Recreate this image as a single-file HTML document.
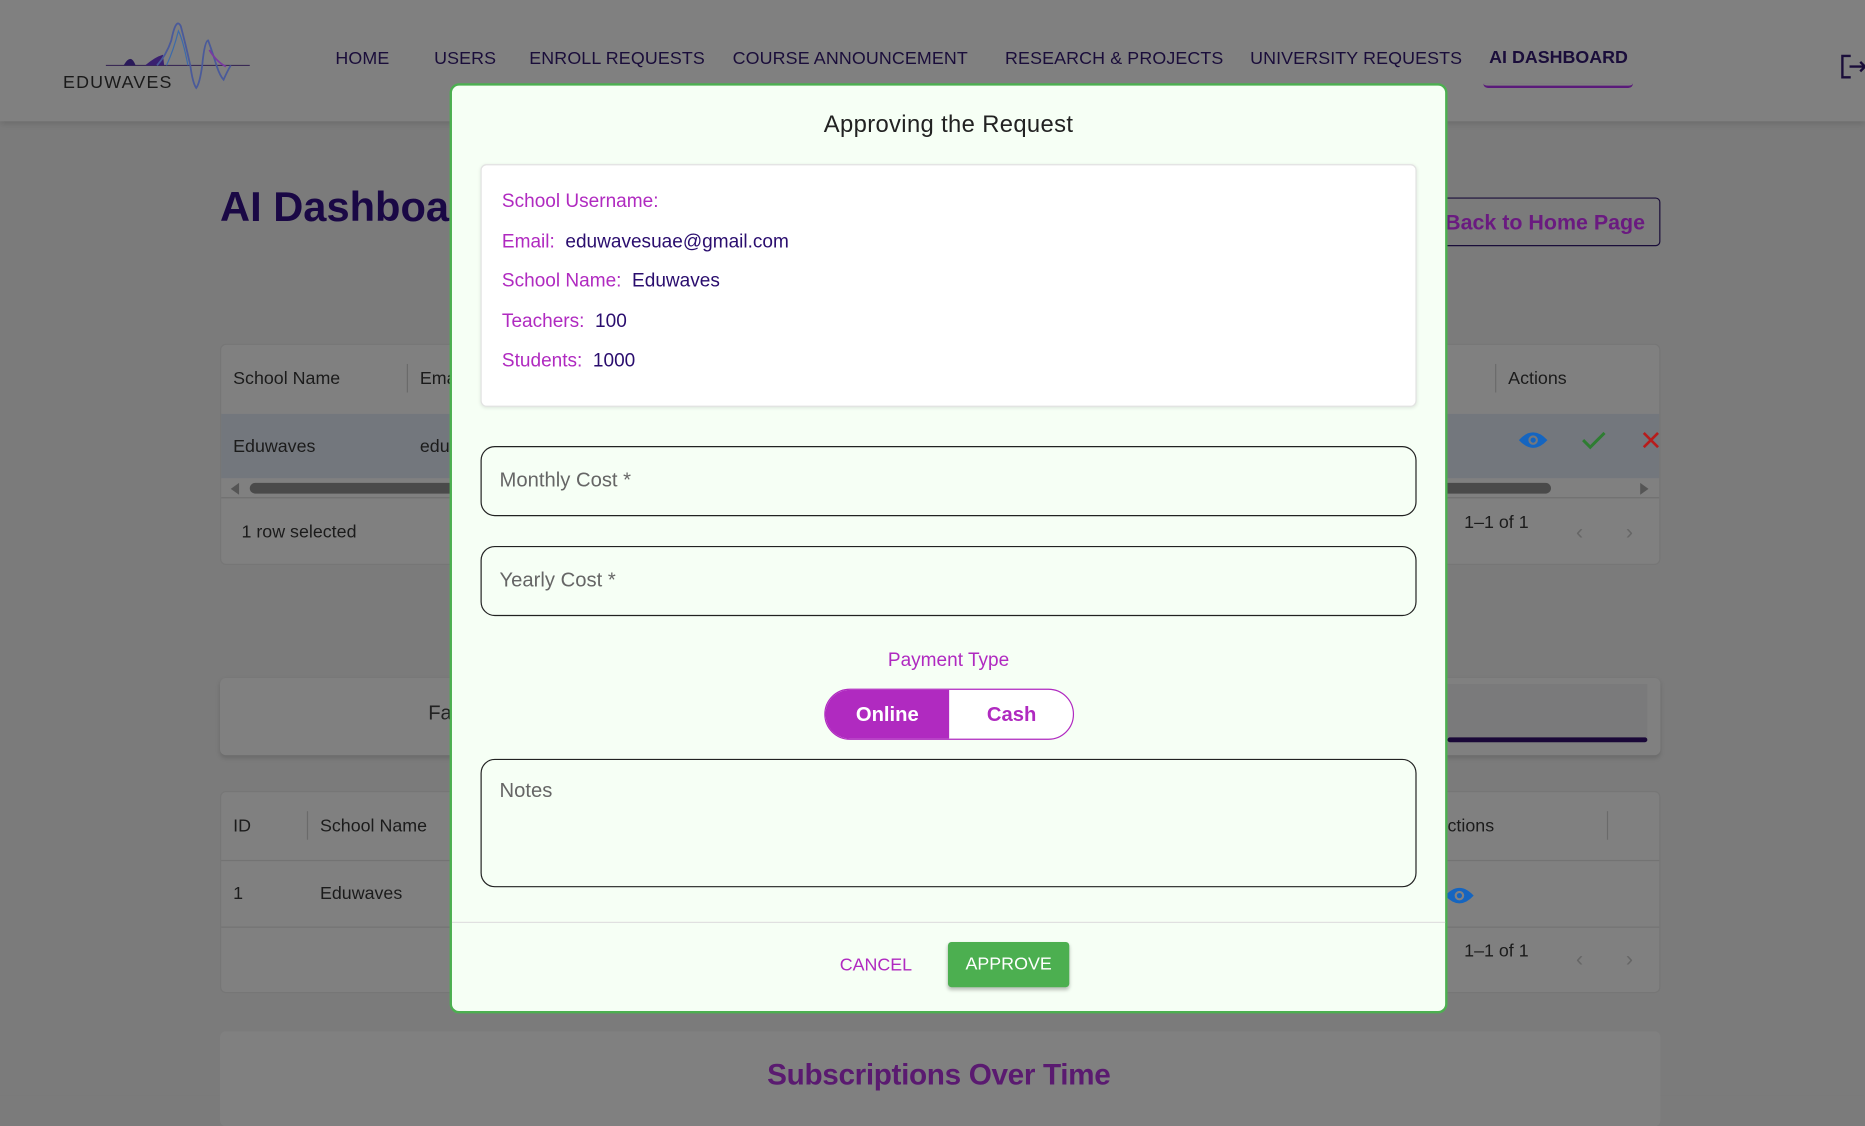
<!DOCTYPE html>
<html><head><meta charset="utf-8"><style>
*{box-sizing:border-box;margin:0;padding:0}
html,body{width:1865px;height:1095px;overflow:hidden;background:#7b7b7b;font-family:"Liberation Sans",sans-serif}
#w{position:absolute;left:0;top:0;width:1568px;height:921px;transform:scale(1.18941);transform-origin:0 0;background:#7b7b7b}
.a{position:absolute}
.hdr{left:0;top:0;width:1568px;height:102px;background:#808080;box-shadow:0 2px 6px rgba(0,0,0,.15)}
.nav{top:41px;font-size:15px;color:#1a0d3a;letter-spacing:.1px}
.card{background:#808080;border:1px solid #767676;border-radius:5px}
.t{font-size:15px;color:#1b1b1b}
.modal{left:378px;top:70px;width:839px;height:782px;background:#f6fff5;border:2px solid #4caf50;border-radius:8px}
.lbl{color:#b02ac0}
.val{color:#2a0d6e}
.inp{position:absolute;left:24px;width:787px;border:1.5px solid #222;border-radius:12px;font-size:17px;color:#666;padding-left:15px}
</style></head><body><div id="w">
<div class="a hdr"></div>
<svg class="a" style="left:52px;top:12px" width="160" height="72" viewBox="0 0 160 72">
<line x1="37" y1="43" x2="158" y2="43" stroke="#3a2a55" stroke-width="1"/>
<path d="M52 43 Q58 32 62 43 Z" fill="#2a1a5a"/>
<path d="M70 43 Q78 36 85 34 L86 43 Z" fill="#3a2070"/>
<path d="M80 43 Q88 34 92 22 Q96 2 100 10 Q104 25 108 43 Q110 58 113 62 Q116 58 118 43 Q120 22 123 22 Q126 30 130 43 Q133 52 136 55 Q139 48 142 43" fill="none" stroke="#4a5a9a" stroke-width="1.5"/>
<path d="M88 43 Q94 30 98 14 Q102 22 106 43" fill="none" stroke="#3c6aaa" stroke-width="1"/>
<path d="M124 30 Q130 40 138 44" fill="none" stroke="#7a3aa0" stroke-width="1.5"/>
<text x="1" y="62" font-family="Liberation Sans" font-size="15" fill="#1a1a1a" letter-spacing="1">EDUWAVES</text>
</svg>
<div class="a nav" style="left:282px">HOME</div>
<div class="a nav" style="left:365px">USERS</div>
<div class="a nav" style="left:445px">ENROLL REQUESTS</div>
<div class="a nav" style="left:616px">COURSE ANNOUNCEMENT</div>
<div class="a nav" style="left:845px">RESEARCH &amp; PROJECTS</div>
<div class="a nav" style="left:1051px">UNIVERSITY REQUESTS</div>
<div class="a nav" style="left:1252px;top:40px;font-weight:bold;letter-spacing:0">AI DASHBOARD</div>
<div class="a" style="left:1247px;top:70px;width:126px;height:4px;border-bottom:2px solid #5a1a7a;border-radius:0 0 6px 6px"></div>
<svg class="a" style="left:1546px;top:44px" width="24" height="24" viewBox="0 0 24 24"><path d="M10 3H3v18h7M9 12h13M18 8l4 4-4 4" fill="none" stroke="#1a0d3a" stroke-width="2"/></svg>

<div class="a" style="left:185px;top:155px;font-size:35px;font-weight:bold;color:#1a0845">AI Dashboard</div>
<div class="a" style="left:1150px;top:166px;width:246px;height:41px;border:1.5px solid #1a0d3a;border-radius:4px;font-size:18px;font-weight:bold;color:#6a1a80;padding:10px 0 0 64px">Back to Home Page</div>

<div class="a card" style="left:185px;top:289px;width:1211px;height:186px"></div>
<div class="a" style="left:186px;top:348px;width:1209px;height:54px;background:#73777d"></div>
<div class="a t" style="left:196px;top:310px">School Name</div>
<div class="a" style="left:342px;top:306px;width:1px;height:24px;background:#6a6a6a"></div>
<div class="a t" style="left:353px;top:310px">Email</div>
<div class="a t" style="left:196px;top:367px">Eduwaves</div>
<div class="a t" style="left:353px;top:367px">edu</div>
<div class="a" style="left:1257px;top:306px;width:1px;height:24px;background:#6a6a6a"></div>
<div class="a t" style="left:1268px;top:310px">Actions</div>
<svg class="a" style="left:1276px;top:361px" width="26" height="18" viewBox="0 0 26 18"><path d="M1 9Q13 -4 25 9Q13 22 1 9Z" fill="#1565c0"/><circle cx="13" cy="9" r="4" fill="#73777d"/><circle cx="13" cy="9" r="2.2" fill="#1565c0"/></svg>
<svg class="a" style="left:1329px;top:361px" width="22" height="18" viewBox="0 0 22 18"><path d="M2 9l6 6L20 3" fill="none" stroke="#2e7d32" stroke-width="2.5"/></svg>
<svg class="a" style="left:1380px;top:362px" width="16" height="16" viewBox="0 0 16 16"><path d="M2 2l12 12M14 2L2 14" stroke="#b71c1c" stroke-width="2.2"/></svg>
<div class="a" style="left:210px;top:406px;width:1094px;height:9px;background:#4a4a4a;border-radius:5px"></div>
<div class="a" style="left:194px;top:406px;width:0;height:0;border:5px solid transparent;border-right:7px solid #555;border-left:0"></div>
<div class="a" style="left:1379px;top:406px;width:0;height:0;border:5px solid transparent;border-left:7px solid #555;border-right:0"></div>
<div class="a" style="left:186px;top:418px;width:1209px;height:1px;background:#707070"></div>
<div class="a t" style="left:203px;top:439px">1 row selected</div>
<div class="a t" style="left:1231px;top:431px">1–1 of 1</div>
<div class="a" style="left:1325px;top:437px;font-size:18px;color:#666">‹</div>
<div class="a" style="left:1367px;top:437px;font-size:18px;color:#666">›</div>

<div class="a card" style="left:185px;top:570px;width:1211px;height:65px;border:none;box-shadow:0 2px 4px rgba(0,0,0,.15)"></div>
<div class="a" style="left:1217px;top:575px;width:168px;height:48px;background:#7a7a7b"></div>
<div class="a" style="left:1217px;top:620px;width:168px;height:4px;background:#1a0838;border-radius:2px"></div>
<div class="a" style="left:360px;top:590px;font-size:17px;color:#222">Fa</div>

<div class="a card" style="left:185px;top:665px;width:1211px;height:170px"></div>
<div class="a t" style="left:196px;top:686px">ID</div>
<div class="a" style="left:258px;top:682px;width:1px;height:24px;background:#6a6a6a"></div>
<div class="a t" style="left:269px;top:686px">School Name</div>
<div class="a t" style="left:1217px;top:686px">ctions</div>
<div class="a" style="left:1351px;top:682px;width:1px;height:24px;background:#6a6a6a"></div>
<div class="a" style="left:186px;top:723px;width:1209px;height:1px;background:#737373"></div>
<div class="a t" style="left:196px;top:743px">1</div>
<div class="a t" style="left:269px;top:743px">Eduwaves</div>
<svg class="a" style="left:1214px;top:744px" width="26" height="18" viewBox="0 0 26 18"><path d="M1 9Q13 -4 25 9Q13 22 1 9Z" fill="#1565c0"/><circle cx="13" cy="9" r="4" fill="#808080"/><circle cx="13" cy="9" r="2.2" fill="#1565c0"/></svg>
<div class="a" style="left:186px;top:779px;width:1209px;height:1px;background:#737373"></div>
<div class="a t" style="left:1231px;top:791px">1–1 of 1</div>
<div class="a" style="left:1325px;top:796px;font-size:18px;color:#666">‹</div>
<div class="a" style="left:1367px;top:796px;font-size:18px;color:#666">›</div>

<div class="a card" style="left:185px;top:867px;width:1211px;height:80px;border:none"></div>
<div class="a" style="left:645px;top:890px;font-size:25px;font-weight:bold;color:#5a1a70;letter-spacing:-0.3px">Subscriptions Over Time</div>

<div class="a modal">
 <div class="a" style="left:0;top:22px;width:835px;text-align:center;font-size:20px;color:#222;letter-spacing:.3px">Approving the Request</div>
 <div class="a" style="left:24px;top:66px;width:787px;height:204px;background:#fff;border:1px solid #e2e2e2;border-radius:5px;box-shadow:0 1px 3px rgba(0,0,0,.1);font-size:16px;line-height:33.6px;padding:14px 0 0 17px">
  <div class="lbl">School Username:</div>
  <div><span class="lbl">Email:</span>&nbsp; <span class="val">eduwavesuae@gmail.com</span></div>
  <div><span class="lbl">School Name:</span>&nbsp; <span class="val">Eduwaves</span></div>
  <div><span class="lbl">Teachers:</span>&nbsp; <span class="val">100</span></div>
  <div><span class="lbl">Students:</span>&nbsp; <span class="val">1000</span></div>
 </div>
 <div class="inp" style="top:303px;height:59px;line-height:56px">Monthly Cost *</div>
 <div class="inp" style="top:387px;height:59px;line-height:56px">Yearly Cost *</div>
 <div class="a" style="left:0;top:475px;width:835px;text-align:center;font-size:16px;color:#b02ac0">Payment Type</div>
 <div class="a" style="left:313px;top:507px;width:210px;height:43px;border:1px solid #b02ac0;border-radius:22px;overflow:hidden;background:#fff;font-size:17px;font-weight:bold">
  <div class="a" style="left:0;top:0;width:104px;height:41px;background:#b02ac0;color:#fff;text-align:center;line-height:41px">Online</div>
  <div class="a" style="left:104px;top:0;width:105px;height:41px;color:#b02ac0;text-align:center;line-height:41px">Cash</div>
 </div>
 <div class="inp" style="top:566px;height:108px;padding-top:16px">Notes</div>
 <div class="a" style="left:0;top:703px;width:835px;height:1px;background:#e0e0e0"></div>
 <div class="a" style="left:326px;top:731px;font-size:15px;color:#b02ac0">CANCEL</div>
 <div class="a" style="left:417px;top:720px;width:102px;height:38px;background:#4caf50;border-radius:3px;box-shadow:0 2px 3px rgba(0,0,0,.25);color:#fff;font-size:15px;text-align:center;line-height:38px">APPROVE</div>
</div>
</div></body></html>
